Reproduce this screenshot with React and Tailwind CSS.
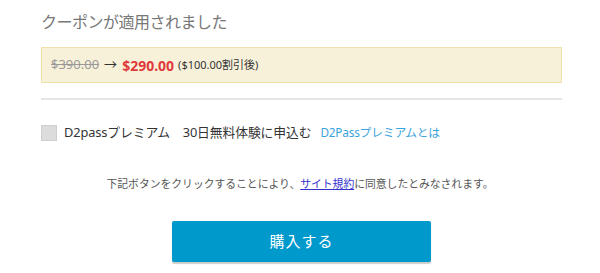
export default function App() {
  return (
    <div
      className="w-[600px] h-[273px] bg-white overflow-hidden"
      style={{ fontFamily: '"Noto Sans", "Noto Sans CJK JP", sans-serif' }}
    >
      <div className="ml-[41px] w-[521px] pt-[10px]">
        {/* Title */}
        <h2 className="text-[16px] leading-[24px] text-[#777] tracking-[-0.5px]">
          クーポンが適用されました
        </h2>

        {/* Price box */}
        <div className="mt-[13px] h-[36px] flex items-center pl-[9px] bg-[#f8f1da] border border-[#efe0ac]">
          <span className="text-[13px] text-[#999] line-through">$390.00</span>
          <span className="text-[13px] text-[#333] mx-[5px]">→</span>
          <span className="text-[14px] font-bold text-[#e03a3a]">$290.00</span>
          <span className="text-[11px] text-[#333] ml-[4px]">($100.00割引後)</span>
        </div>

        {/* Divider */}
        <div className="mt-[15px] border-t-2 border-[#e6e6e6]" />

        {/* Premium checkbox */}
        <div className="mt-[25px] flex items-center h-[16px]">
          <span className="w-[16px] h-[16px] bg-[#dcdcdc] border border-[#cfcfcf]" />
          <span className="ml-[7px] text-[12.8px] tracking-[-0.1px] text-[#333]">
            D2passプレミアム　30日無料体験に申込む
          </span>
          <a className="ml-[9px] text-[11.8px] tracking-[-0.2px] text-[#3aa3d9]">D2Passプレミアムとは</a>
        </div>
      </div>

      {/* Notice */}
      <p className="mt-[35px] text-center text-[10.8px] text-[#555]">
        下記ボタンをクリックすることにより、
        <a className="text-[#3333cc] underline">サイト規約</a>
        に同意したとみなされます。
      </p>

      {/* Button */}
      <div className="mt-[29px] flex justify-center">
        <button className="ml-[3px] w-[259px] h-[41px] rounded-[2px] bg-[#0099cc] text-white text-[15px] tracking-[1px] shadow-[0_2px_1px_rgba(0,0,0,0.2)]">
          購入する
        </button>
      </div>
    </div>
  );
}
